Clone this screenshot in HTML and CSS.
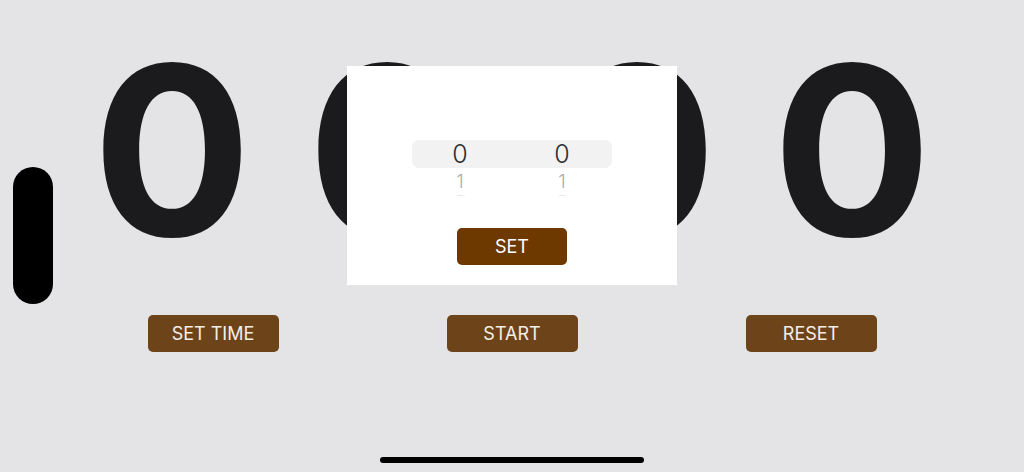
FILE: index.html
```html
<!DOCTYPE html>
<html lang="en">
<head>
  <meta charset="UTF-8">
  <title>Timer</title>
  <link rel="stylesheet" href="styles.css">
</head>
<body>
  <div class="island"></div>

  <div class="clock">
    <div class="group">
      <span class="digit">0</span>
      <span class="digit">0</span>
    </div>
    <div class="group">
      <span class="digit">0</span>
      <span class="digit">0</span>
    </div>
  </div>

  <div class="controls">
    <button class="btn">SET TIME</button>
    <button class="btn">START</button>
    <button class="btn">RESET</button>
  </div>

  <div class="home-bar"></div>

  <div class="sheet">
    <div class="picker">
      <div class="picker-band"></div>
      <div class="wheel">
        <span class="row current">0</span>
        <span class="row next">1</span>
        <span class="far"></span>
      </div>
      <div class="wheel">
        <span class="row current">0</span>
        <span class="row next">1</span>
        <span class="far"></span>
      </div>
    </div>
    <button class="btn btn-set">SET</button>
  </div>
</body>
</html>
```

FILE: styles.css
```css
* {
  box-sizing: border-box;
}

body {
  margin: 0;
  width: 1024px;
  height: 472px;
  overflow: hidden;
  position: relative;
  background: #e4e4e6;
  font-family: Inter, "Noto Sans", sans-serif;
  display: flex;
  flex-direction: column;
  align-items: center;
}

.island {
  position: absolute;
  left: 13px;
  top: 167px;
  width: 40px;
  height: 137px;
  border-radius: 20px;
  background: #000;
}

.clock {
  display: flex;
  gap: 35px;
  margin-top: 30px;
}

.group {
  display: flex;
}

.digit {
  width: 215px;
  height: 240px;
  font-size: 236px;
  font-weight: 700;
  line-height: 240px;
  text-align: center;
  color: #1b1b1d;
}

.controls {
  display: flex;
  gap: 168px;
  margin-top: 45px;
}

.btn {
  width: 131px;
  height: 37px;
  border: none;
  border-radius: 5px;
  background: #6d4419;
  color: #f4efe9;
  font-family: Inter, "Noto Sans", sans-serif;
  font-size: 18px;
  padding: 0;
}

.home-bar {
  margin-top: auto;
  margin-bottom: 9px;
  width: 264px;
  height: 6px;
  border-radius: 3px;
  background: #000;
}

/* time picker dialog */
.sheet {
  position: absolute;
  left: 347px;
  top: 66px;
  width: 330px;
  height: 219px;
  background: #fff;
  display: flex;
  flex-direction: column;
  align-items: center;
  padding-top: 74px;
}

.picker {
  position: relative;
  width: 200px;
  height: 58px;
  display: flex;
}

.picker-band {
  position: absolute;
  left: 0;
  top: 0;
  width: 200px;
  height: 28px;
  border-radius: 7px;
  background: #f2f2f2;
}

.wheel {
  position: relative;
  width: 96px;
  display: flex;
  flex-direction: column;
  align-items: center;
}

.wheel + .wheel {
  width: 104px;
  padding-left: 4px;
}

.row {
  display: block;
  text-align: center;
}

.current {
  height: 28px;
  line-height: 28px;
  font-size: 25px;
  font-weight: 300;
  color: #2e2e30;
}

.next {
  height: 22px;
  margin-top: 3px;
  line-height: 22px;
  font-size: 19px;
  font-weight: 300;
  color: #acacae;
}

/* top edge of the row rolling away under the wheel */
.far {
  display: block;
  width: 9px;
  height: 3px;
  margin-top: 2px;
  border-top: 1px solid #e6e6e8;
  border-radius: 50% 50% 0 0;
}

.btn-set {
  margin-top: 30px;
  width: 110px;
  background: #6e3900;
  color: #fff;
}
```
